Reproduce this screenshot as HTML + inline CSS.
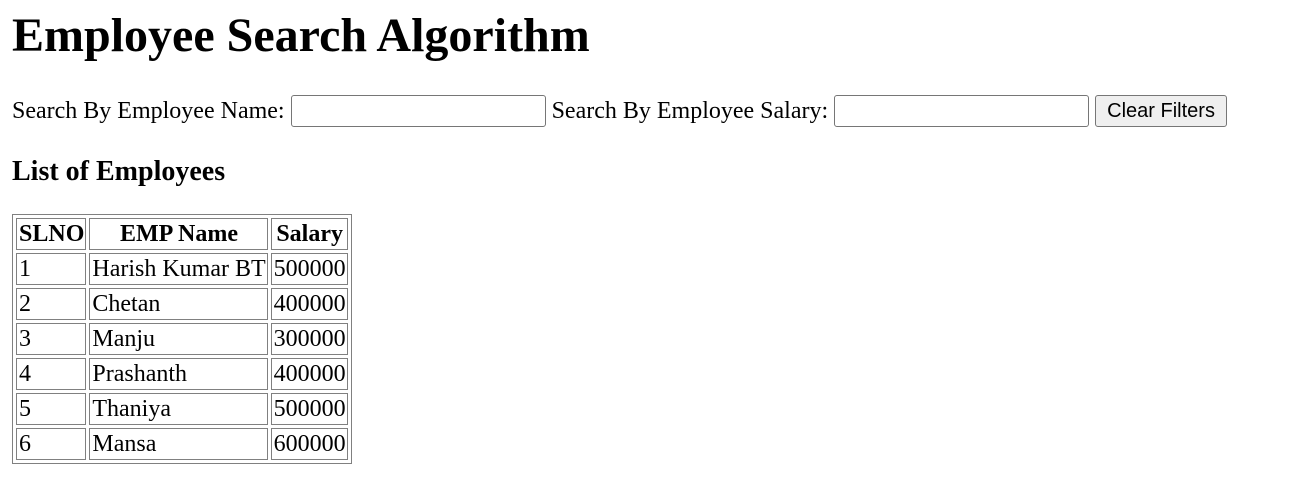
<!DOCTYPE html>
<html><head><style>
body{margin:0;font-family:"Liberation Serif",serif;font-size:24px;color:#000;background:#fff;position:relative;width:1294px;height:487px;overflow:hidden}
h1{position:absolute;left:12px;top:12px;margin:0;font-size:48px;line-height:48px;white-space:nowrap}
.row{position:absolute;left:12px;top:95px;height:32px;display:flex;align-items:center;white-space:nowrap}
input{width:255px;height:32px;border:1px solid #767676;border-radius:3px;box-sizing:border-box;margin:0 6px 0 6px}
button{font-family:"Liberation Sans",sans-serif;font-size:20px;padding:0 11px;border:1px solid #767676;border-radius:3px;background:#efefef;height:32px;margin-left:0}
h3{position:absolute;left:12px;top:156px;margin:0;font-size:28px;line-height:32px}
table{position:absolute;left:12px;top:214px;border:1px solid #808080;border-spacing:3px}
td,th{border:1px solid #808080;padding:1px 1px 1px 2px;line-height:28px}
</style></head><body>
<h1>Employee Search Algorithm</h1>
<div class="row">Search By Employee Name:<input type="text">Search By Employee Salary:<input type="text"><button>Clear Filters</button></div>
<h3>List of Employees</h3>
<table>
<tr><th>SLNO</th><th>EMP Name</th><th>Salary</th></tr>
<tr><td>1</td><td>Harish Kumar BT</td><td>500000</td></tr>
<tr><td>2</td><td>Chetan</td><td>400000</td></tr>
<tr><td>3</td><td>Manju</td><td>300000</td></tr>
<tr><td>4</td><td>Prashanth</td><td>400000</td></tr>
<tr><td>5</td><td>Thaniya</td><td>500000</td></tr>
<tr><td>6</td><td>Mansa</td><td>600000</td></tr>
</table>
</body></html>
